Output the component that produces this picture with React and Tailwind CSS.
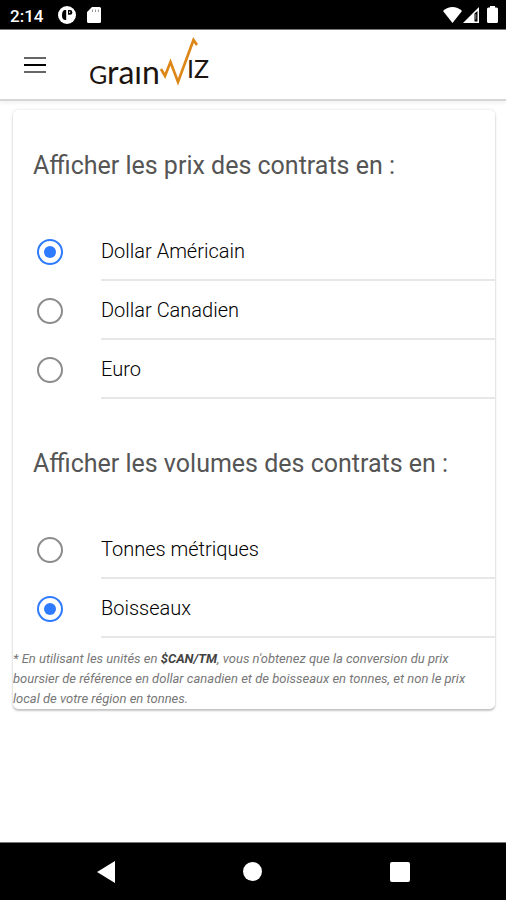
import { useState } from "react";

const contractPrices = ["Dollar Américain", "Dollar Canadien", "Euro"];
const contractVolumes = ["Tonnes métriques", "Boisseaux"];

function StatusBar() {
  return (
    <div className="flex h-[30px] items-center justify-between border-b border-[#777] bg-black pl-[10px] pr-[8px] text-white">
      <div className="flex items-center">
        <span className="w-[48px] pt-[2px] text-[17px] leading-[28px] font-medium">2:14</span>
        <svg className="h-[18px] w-[18px]" viewBox="0 0 18 18" aria-hidden="true">
          <circle cx="9" cy="9" r="9" fill="#fff" />
          <path d="M6.500 4h1.700v10H7C4.800 13.500 4 12 4 9.500S4.500 4.500 6.500 4zM10 4h2a2.200 2.200 0 0 1 0 4.800h-2z" fill="#000" />
          <path d="M11.200 5.500h1v1.500h-1z" fill="#fff" />
        </svg>
        <svg className="ml-[11px] h-4 w-[14px]" viewBox="0 0 14 16" aria-hidden="true">
          <path d="M5 0h7.500A1.500 1.500 0 0 1 14 1.500v13a1.500 1.500 0 0 1-1.500 1.500h-11A1.500 1.500 0 0 1 0 14.500V5z" fill="#fff" />
          <path d="M5 2.500h1v2.500H5zM8 2.500h1v2.500H8zM11 2.500h1v2.500h-1z" fill="#999" />
        </svg>
      </div>
      <div className="flex items-center">
        <svg className="h-4 w-[19px]" viewBox="0 0 19 16" aria-hidden="true">
          <path d="M0 4C5.500-1.200 13.500-1.200 19 4L9.500 16z" fill="#fff" />
        </svg>
        <svg className="ml-[1px] h-4 w-4" viewBox="0 0 16 16" aria-hidden="true">
          <path d="M16 0v16H0z" fill="#fff" />
          <path d="M11.500 6.500l3-2.500V14.500h-3z" fill="#000" />
          <path d="M12.300 7h1v5.500h-1z" fill="#888" />
        </svg>
        <svg className="ml-2 h-[17px] w-[11px]" viewBox="0 0 11 17" aria-hidden="true">
          <path d="M3 0h5v1.500h1.500A1.500 1.500 0 0 1 11 3v12.500A1.500 1.500 0 0 1 9.500 17h-8A1.500 1.500 0 0 1 0 15.500V3a1.500 1.500 0 0 1 1.500-1.500H3z" fill="#fff" />
        </svg>
      </div>
    </div>
  );
}

function Logo() {
  return (
    <svg className="h-[60px] w-[124px]" viewBox="0 0 124 60" role="img" aria-label="GrainWiz">
      <g fill="#1d1410" className="font-['Lato',sans-serif]">
        <text x="-1" y="49" fontSize="25">G</text>
        <text x="17" y="49" fontSize="32">raın</text>
        <text x="97" y="43" fontSize="25">IZ</text>
      </g>
      <path d="M71 34l4 7 5.500-14 7.500 20L103.500 5l3.500 5" fill="none" stroke="#dc8718" strokeWidth="2.700" strokeLinejoin="miter" />
    </svg>
  );
}

function Header() {
  return (
    <header className="flex h-[71px] items-center border-b-2 border-[#d6d6d6] bg-white px-6 shadow-[0_2px_4px_rgba(0,0,0,0.06)]">
      <button type="button" aria-label="Menu" className="h-4 w-[22px]">
        <svg className="h-4 w-[22px]" viewBox="0 0 22 16" aria-hidden="true">
          <path d="M0 1h22M0 15h22" stroke="#666" strokeWidth="2" />
          <path d="M0 8h22" stroke="#000" strokeWidth="2" />
        </svg>
      </button>
      <div className="ml-11">
        <Logo />
      </div>
    </header>
  );
}

function RadioRow({ name, label, checked, onChange }) {
  return (
    <label className="flex h-[59px] items-stretch pl-6">
      <span className="flex w-[64px] shrink-0 items-center">
        <input
          type="radio"
          name={name}
          checked={checked}
          onChange={onChange}
          className="grid h-[26px] w-[26px] appearance-none place-content-center rounded-full border-2 border-[#8c8c8c] before:h-3 before:w-3 before:rounded-full checked:border-[#2f7bff] checked:before:bg-[#2f7bff]"
        />
      </span>
      <span className="flex flex-1 items-center border-b-2 border-[#e7e7e7] text-[20px] leading-6 font-light text-black">
        {label}
      </span>
    </label>
  );
}

function RadioSection({ name, title, options, initial, roomy }) {
  const [value, setValue] = useState(initial);
  return (
    <fieldset>
      <legend
        className={
          "px-5 pb-10 text-[25px] leading-8 font-normal text-[#555] " + (roomy ? "pt-[49px]" : "pt-10")
        }
      >
        {title}
      </legend>
      {options.map((option) => (
        <RadioRow
          key={option}
          name={name}
          label={option}
          checked={value === option}
          onChange={() => setValue(option)}
        />
      ))}
    </fieldset>
  );
}

export default function App() {
  return (
    <div className="flex min-h-screen flex-col bg-white font-['Roboto',sans-serif]">
      <StatusBar />
      <Header />
      <main className="flex-1 px-[11px] pt-[9px]">
        <form className="ml-[2px] overflow-hidden rounded-[5px] bg-white shadow-[0_2px_2px_rgba(0,0,0,0.2),0_0_3px_rgba(0,0,0,0.14)]">
          <RadioSection
            name="price"
            title="Afficher les prix des contrats en :"
            options={contractPrices}
            initial="Dollar Américain"
          />
          <RadioSection
            name="volume"
            title="Afficher les volumes des contrats en :"
            options={contractVolumes}
            initial="Boisseaux"
            roomy
          />
          <p className="pt-[11px] text-[13px] leading-5 text-[#777] italic">
            * En utilisant les unités en <strong className="font-bold text-[#444]">$CAN/TM</strong>, vous n'obtenez que la conversion du prix
            boursier de référence en dollar canadien et de boisseaux en tonnes, et non le prix local de votre région en tonnes.
          </p>
        </form>
      </main>
      <nav className="flex h-[58px] items-center justify-between border-t border-[#777] bg-black pr-[96px] pl-[97px]">
        <button type="button" aria-label="Retour">
          <svg className="h-[22px] w-[18px]" viewBox="0 0 18 22" aria-hidden="true">
            <path d="M18 0v22L0 11z" fill="#fff" />
          </svg>
        </button>
        <button type="button" aria-label="Accueil" className="h-[19px] w-[19px] rounded-full bg-white" />
        <button type="button" aria-label="Applications" className="h-5 w-5 rounded-[2px] bg-white" />
      </nav>
    </div>
  );
}
